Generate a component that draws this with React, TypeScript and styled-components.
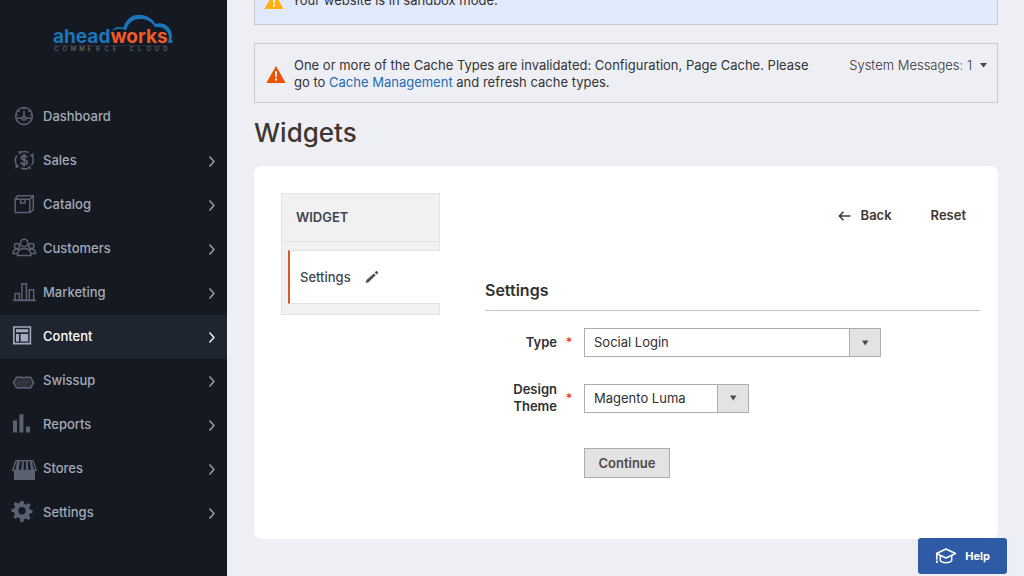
import React, { useState } from 'react'
import styled, { createGlobalStyle, css } from 'styled-components'

const GlobalStyle = createGlobalStyle`
  *,
  *::before,
  *::after {
    box-sizing: border-box;
  }

  body {
    margin: 0;
    background-color: #eeeff5;
    color: #41362f;
    font-family: Inter, 'Open Sans', sans-serif;
    font-size: 13px;
    line-height: 17px;
  }

  button,
  select {
    font: inherit;
    color: inherit;
  }
`

const Page = styled.div`
  display: flex;
  min-height: 100vh;
`

const Sidebar = styled.aside`
  flex: 0 0 227px;
  background-color: #151921;
`

const LogoLink = styled.a`
  display: flex;
  justify-content: center;
  height: 95px;
  padding-top: 12px;
`

const MenuItem = styled.a<{ $active?: boolean }>`
  display: flex;
  align-items: center;
  height: 44px;
  padding: 0 11px 0 12px;
  color: ${({ $active }) => ($active ? '#ffffff' : '#a3a9b8')};
  background-color: ${({ $active }) => ($active ? '#1f2431' : 'transparent')};
  font-weight: 500;
  text-decoration: none;
`

const MenuIcon = styled.svg<{ $active?: boolean }>`
  width: 26px;
  height: 24px;
  margin-right: 5px;
  color: ${({ $active }) => ($active ? '#a3abbf' : '#5b6170')};
  overflow: visible;
`

const MenuLabel = styled.span`
  flex: 1;
  padding-bottom: 2px;
`

const Main = styled.main`
  flex: 1;
  min-width: 0;
  margin-top: -24px;
  padding: 0 26px 37px 27px;
`

const noticeBox = css`
  display: flex;
  align-items: center;
  border: 1px solid #c8ccd3;
  color: #333333;
`

const SandboxNotice = styled.div`
  ${noticeBox}
  gap: 8px;
  padding: 15px 9px;
  background-color: #e1eafc;
`

const SystemNotice = styled.div`
  ${noticeBox}
  margin-top: 18px;
  padding: 13px 10px 11px 11px;
`

const NoticeText = styled.p`
  flex: 1;
  margin: 0 24px 0 8px;
`

const NoticeLink = styled.a`
  color: #1f6bb7;
  text-decoration: none;
`

const MessagesToggle = styled.button`
  display: flex;
  align-items: center;
  align-self: flex-start;
  gap: 8px;
  padding: 0;
  border: 0;
  background: none;
  font-weight: 300;
  white-space: nowrap;
`

const PageTitle = styled.h1`
  margin: 12px 0 15px;
  font-size: 26px;
  font-weight: 500;
  line-height: 36px;
`

const Card = styled.section`
  display: flex;
  gap: 45px;
  padding: 27px 18px 61px 27px;
  border-radius: 8px;
  background-color: #ffffff;
`

const Tabs = styled.nav`
  flex: 0 0 159px;
  align-self: flex-start;
`

const TabsTitle = styled.div`
  padding: 15px 14px;
  border: 1px solid #e3e3e3;
  background-color: #f1f1f1;
  color: #41464d;
  font-weight: 600;
`

const TabsBody = styled.div`
  padding: 8px 0 10px 6px;
  border: 1px solid #e3e3e3;
  border-top: 0;
  background-color: #f1f1f1;
`

const Tab = styled.a`
  display: flex;
  align-items: center;
  gap: 14px;
  height: 54px;
  margin-right: -1px;
  padding-left: 10px;
  border: 1px solid #e3e3e3;
  border-width: 1px 0;
  border-left: 2px solid #d9591c;
  background-color: #ffffff;
  color: #41464d;
  font-weight: 500;
  text-decoration: none;
`

const Content = styled.div`
  flex: 1;
  min-width: 0;
`

const Toolbar = styled.div`
  display: flex;
  justify-content: flex-end;
  gap: 39px;
  padding: 14px 14px 0 0;
`

const TextButton = styled.button`
  display: flex;
  align-items: center;
  gap: 10px;
  padding: 0;
  border: 0;
  background: none;
  font-weight: 600;
`

const SectionTitle = styled.h2`
  margin: 57px 0 17px;
  padding-bottom: 10px;
  border-bottom: 1px solid #cac3b4;
  color: #303030;
  font-size: 16px;
  font-weight: 600;
  line-height: 19px;
`

const Field = styled.div`
  display: grid;
  grid-template-columns: 72px 12px 1fr;
  align-items: center;
  column-gap: 6px;
  margin-bottom: 24px;
`

const FieldLabel = styled.label`
  color: #303030;
  font-weight: 600;
  text-align: right;
`

const Required = styled.span`
  color: #e22626;
  text-align: center;
`

const SelectBox = styled.div<{ $wide?: boolean }>`
  display: flex;
  width: ${({ $wide }) => ($wide ? '297px' : '165px')};
  margin-left: 3px;
  border: 1px solid #adadad;
  background: linear-gradient(#e3e3e3, #e3e3e3) right / 31px 100% no-repeat;
`

const Select = styled.select`
  flex: 1;
  height: 27px;
  margin-right: 30px;
  padding: 0 9px;
  border: 0;
  border-right: 1px solid #adadad;
  border-radius: 0;
  background-color: #ffffff;
  color: #303030;
  appearance: none;
`

const SelectArrow = styled.svg`
  flex: none;
  align-self: center;
  width: 8px;
  height: 6px;
  margin: 0 11px 0 -19px;
  pointer-events: none;
`

const ContinueButton = styled.button`
  min-width: 86px;
  height: 30px;
  margin: 9px 0 0 99px;
  padding: 0 12px;
  border: 1px solid #adadad;
  background-color: #e3e3e3;
  color: #514943;
  font-weight: 600;
`

const HelpButton = styled.button`
  position: fixed;
  right: 17px;
  bottom: 2px;
  display: flex;
  align-items: center;
  gap: 8px;
  height: 36px;
  padding: 0 17px;
  border: 0;
  border-radius: 3px;
  background-color: #2f5ba6;
  color: #ffffff;
  font-size: 11px;
  font-weight: 700;
`

const line = { fill: 'none', stroke: 'currentColor', strokeWidth: 1.5 }

const icons: Record<string, React.ReactNode> = {
  dashboard: (
    <g {...line}>
      <circle cx="12" cy="11" r="8.4" />
      <path d="M4 13.2h6.2M13.8 13.2H20M12 6v5.2M12 2.8v1.8M6.4 5.6l1.2 1.2M17.6 5.6l-1.2 1.2M4 10h1.7M20 10h-1.7" />
      <circle cx="12" cy="13.2" r="1.8" />
    </g>
  ),
  sales: (
    <>
      <g {...line}>
        <path d="M8.5 3.4a8.6 8.6 0 0 1 8 .1M20.2 7.2a8.8 8.8 0 0 1-.8 9.2M16 19.2a8.7 8.7 0 0 1-7-.2M4.9 16.4a8.8 8.8 0 0 1 .1-10" />
        <path d="M15.1 8.6c-.4-1.3-1.5-1.8-3-1.8-1.7 0-2.8.8-2.8 2 0 3 6 1.3 6 4.4 0 1.4-1.3 2.2-3.1 2.2-1.7 0-2.9-.7-3.2-2.1M12.2 4.8v12.6" strokeWidth="1.8" />
      </g>
      <path d="M6 2l4.2.4-2.8 3.4zM21.8 4.2l-.7 4.4-3.6-2.5zM19 20.4l-3.9-1.2 2.9-3zM3.4 19.5l.4-4.4 3.9 2.3z" fill="currentColor" />
    </>
  ),
  catalog: (
    <g {...line}>
      <path d="M3.2 6.2h14.6v13.3H3.2zM3.2 6.2l2.4-3.4h15.7v14l-3.5 2.7M17.8 6.2l3.5-3.4M8.600 6.200v3.900h4.400V6.200" />
    </g>
  ),
  customers: (
    <g {...line}>
      <circle cx="12.2" cy="6" r="3.7" />
      <circle cx="5" cy="9" r="2.6" />
      <circle cx="19.4" cy="9" r="2.6" />
      <path d="M5.4 18.4c0-4.6 2.4-7 6.8-7s6.8 2.4 6.8 7zM5.4 16.5H.9c0-2.700 1.600-4.500 4-4.500 1 0 1.800.2 2.400.6M19 16.500h4.500c0-2.700-1.600-4.500-4-4.500-1 0-1.800.2-2.400.6" />
    </g>
  ),
  marketing: (
    <g {...line}>
      <path d="M3.100 19v-6.600h4.200V19M9.900 19V2.800h4.500V19M17.200 19V8.700h4.500V19" />
      <path d="M1 19.300h22.800" strokeWidth="1.800" />
    </g>
  ),
  content: (
    <>
      <path d="M1.8 2h16.6v16.6H1.8z" fill="none" stroke="currentColor" strokeWidth="1.6" />
      <path d="M4 4.300h12.200v3H4zM4 9h3v7.600H4zM8.600 9h7.600v7.600H8.600z" fill="currentColor" />
    </>
  ),
  swissup: (
    <g {...line}>
      <path
        d="M4.500 8.200h5l2.100.8 2.100-.8h5l2.800 5.400-2.800 5.400h-5l-2.100-.8-2.100.8h-5l-3-5.400z"
        fill="#2b3038"
        strokeLinejoin="round"
      />
      <path d="M5.800 15.800l3-4.200M9.200 16l3.600-4.600M13.400 15.600l3.200-4" strokeWidth="1" opacity=".6" />
    </g>
  ),
  reports: <path d="M1 7.4h4v12.2H1zM7.4 1.2h4v18.4h-4zM14 13.4h4v6.2h-4z" fill="currentColor" />,
  stores: (
    <>
      <path d="M4 3.8h17l3.2 9.6H.7z" fill="none" stroke="currentColor" strokeWidth="1.4" />
      <path d="M5 4.2L3.5 13h3.3l1.1-8.8zM10 4.2L9.2 13h2.4l.2-8.8zM13.8 4.2L14 13h2.4l-.8-8.8zM17.6 4.2l1.4 8.8h3L19.6 4.2zM2 14h21v9H2z" fill="currentColor" />
    </>
  ),
  settings: (
    <path
      fillRule="evenodd"
      fill="currentColor"
      d="M8.5 0h3l.6 2.8 2.1.9L16.6 2l2 2-1.6 2.4.9 2.2 2.6.5v2.8l-2.8.6-.8 2.1 1.7 2.4-2 2-2.5-1.6-2.1.8-.6 2.8h-3L8 17.2l-2.2-.9-2.4 1.6-2-2.1L3 13.4l-.9-2.1-2.6-.5V8l2.7-.6.9-2.1L1.5 3l2-2 2.400 1.600L8 1.700zM10 6.100a3.700 3.700 0 1 0 0 7.400 3.700 3.700 0 0 0 0-7.400z"
    />
  ),
}

const menu = ['Dashboard', 'Sales', 'Catalog', 'Customers', 'Marketing', 'Content', 'Swissup', 'Reports', 'Stores', 'Settings']

function Logo() {
  return (
    <svg width="122" height="42" viewBox="0 0 122 42" role="img" aria-label="aheadworks commerce cloud">
      <path
        d="M59 19c2-4 7-5 11.500-3.200C74 4 82 2 89 3c6 .8 10.500 4 13.500 9 8-2.500 14 2 16 9 1.300 5-.5 9-4 10.500 1.400-3 2.200-7 .3-10.700-2.500-4.800-7-6.500-12.700-5.600C98 9 93.500 7 87.500 7 80 7 75 11 73 18.500c-4-2.500-9-2-14 .5z"
        fill="#1b75bc"
      />
      <text x="0" y="31" fill="#1b75bc" fontFamily="Inter, sans-serif" fontSize="19" fontWeight="700">
        ahead<tspan fill="#f15a29">works</tspan>.
      </text>
      <path d="M1 33.500h112" stroke="#343941" strokeWidth=".6" />
      {'COMMERCE CLOUD'.split('').map((letter, i) => (
        <text key={i} x={1 + i * 8.4} y="39" fill="#686d75" fontFamily="Inter, sans-serif" fontSize="6" fontWeight="500">
          {letter}
        </text>
      ))}
    </svg>
  )
}

function Warning({ color }: { color: string }) {
  return (
    <svg width="20" height="17" viewBox="0 0 20 17" aria-hidden="true">
      <path d="M10 0l9.700 17H.3z" fill={color} />
      <path d="M8.900 5.200h2.200l-.4 6H9.300zM9 12.600h2v2H9z" fill="#ffffff" />
    </svg>
  )
}

function Caret() {
  return (
    <svg width="7" height="5" viewBox="0 0 7 5" aria-hidden="true">
      <path d="M0 0h7L3.500 4.500z" fill="#41464d" />
    </svg>
  )
}

interface SelectFieldProps {
  id: string
  label: string
  options: string[]
  wide?: boolean
}

function SelectField({ id, label, options, wide }: SelectFieldProps) {
  const [value, setValue] = useState(options[0])

  return (
    <Field>
      <FieldLabel htmlFor={id}>{label}</FieldLabel>
      <Required>*</Required>
      <SelectBox $wide={wide}>
        <Select id={id} value={value} onChange={(e) => setValue(e.target.value)}>
          {options.map((o) => (
            <option key={o}>{o}</option>
          ))}
        </Select>
        <SelectArrow viewBox="0 0 8 6" aria-hidden="true">
          <path d="M1 .5h6.500L4.200 5.500z" fill="#514943" />
        </SelectArrow>
      </SelectBox>
    </Field>
  )
}

export default function App() {
  return (
    <>
      <GlobalStyle />
      <Page>
        <Sidebar>
          <LogoLink href="#">
            <Logo />
          </LogoLink>
          <nav>
            {menu.map((name) => {
              const active = name === 'Content'
              return (
                <MenuItem key={name} href="#" $active={active}>
                  <MenuIcon viewBox="0 0 26 24" $active={active} aria-hidden="true">
                    {icons[name.toLowerCase()]}
                  </MenuIcon>
                  <MenuLabel>{name}</MenuLabel>
                  {name !== 'Dashboard' && (
                    <svg width="8" height="12" viewBox="0 0 8 12" aria-hidden="true">
                      <path d="M1.500 1.500L6 6.500l-4.500 5" fill="none" stroke="currentColor" strokeWidth="1.300" />
                    </svg>
                  )}
                </MenuItem>
              )
            })}
          </nav>
        </Sidebar>
        <Main>
          <SandboxNotice>
            <Warning color="#ffb012" />
            Your website is in sandbox mode.
          </SandboxNotice>
          <SystemNotice>
            <Warning color="#eb5202" />
            <NoticeText>
              One or more of the Cache Types are invalidated: Configuration, Page Cache. Please go to{' '}
              <NoticeLink href="#">Cache Management</NoticeLink> and refresh cache types.
            </NoticeText>
            <MessagesToggle type="button">
              System Messages: 1
              <Caret />
            </MessagesToggle>
          </SystemNotice>
          <PageTitle>Widgets</PageTitle>
          <Card>
            <Tabs>
              <TabsTitle>WIDGET</TabsTitle>
              <TabsBody>
                <Tab href="#">
                  Settings
                  <svg width="14" height="14" viewBox="0 0 14 14" aria-hidden="true">
                    <path d="M.5 13l1-3 7.300-6.600 1.900 1.900-7.200 6.900zM9.700 2.600l1.300-1.300c.3-.3.7-.3 1 0l.9.9c.3.300.3.700 0 1l-1.300 1.300z" fill="#514f50" />
                  </svg>
                </Tab>
              </TabsBody>
            </Tabs>
            <Content>
              <Toolbar>
                <TextButton type="button">
                  <svg width="13" height="10" viewBox="0 0 13 10" aria-hidden="true">
                    <path d="M12.500 5H1.500M5.500 .8L1.300 5l4.200 4.200" fill="none" stroke="currentColor" strokeWidth="1.500" />
                  </svg>
                  Back
                </TextButton>
                <TextButton type="button">Reset</TextButton>
              </Toolbar>
              <form onSubmit={(e) => e.preventDefault()}>
                <SectionTitle>Settings</SectionTitle>
                <SelectField id="type" label="Type" options={['Social Login']} wide />
                <SelectField id="theme" label="Design Theme" options={['Magento Luma']} />
                <ContinueButton type="submit">Continue</ContinueButton>
              </form>
            </Content>
          </Card>
        </Main>
      </Page>
      <HelpButton type="button">
        <svg width="22" height="18" viewBox="0 0 22 18" aria-hidden="true">
          <g fill="none" stroke="#ffffff" strokeWidth="1.500" strokeLinejoin="round">
            <path d="M1.500 6.500L11 2l9.500 4.500L11 11z" />
            <path d="M5.300 8.500v5.200c1.600 2.600 9.800 2.600 11.400 0V8.500M1.800 6.800v6" />
          </g>
          <path d="M1 13.500h1.700V16H1z" fill="#ffffff" />
        </svg>
        Help
      </HelpButton>
    </>
  )
}
